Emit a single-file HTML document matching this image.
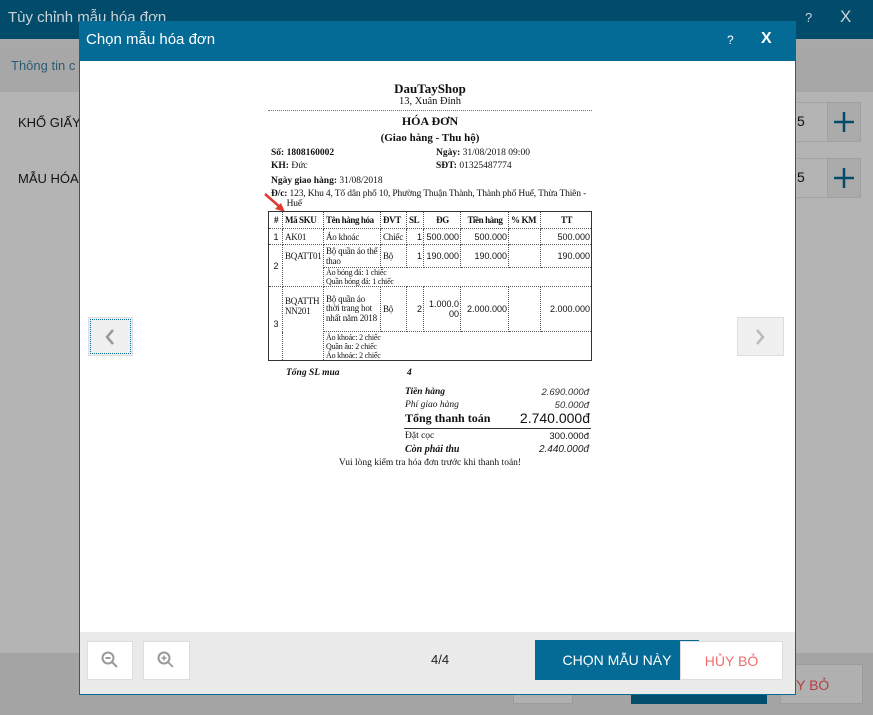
<!DOCTYPE html>
<html><head><meta charset="utf-8"><style>
*{margin:0;padding:0;box-sizing:border-box}
body{width:873px;height:715px;position:relative;overflow:hidden;background:#b4b4b4;font-family:"Liberation Sans","DejaVu Sans",sans-serif}
.abs{position:absolute}
.s{font-family:"Liberation Serif","DejaVu Serif",serif;color:#111}
table{border-collapse:collapse;table-layout:fixed}
td{border:1px dotted #555;font-family:"Liberation Serif",serif;font-size:9px;letter-spacing:-0.2px;padding:0 1px 0 2px;vertical-align:middle;line-height:10px;color:#111;overflow:hidden}
td.n{font-family:"Liberation Sans",sans-serif;font-size:9px;letter-spacing:0}
tr.h td{white-space:nowrap;letter-spacing:-0.4px}
.r{text-align:right}
.c{text-align:center}
</style></head><body>
<div class="abs" style="left:0;top:0;width:873px;height:39px;background:#034b6a"></div>
<div class="abs" style="left:8px;top:9px;font-size:15px;color:#c8d4da">Tùy chỉnh mẫu hóa đơn</div>
<div class="abs" style="left:805px;top:10px;font-size:13px;color:#c8d4da">?</div>
<div class="abs" style="left:840px;top:7px;font-size:17px;color:#c8d4da">X</div>
<div class="abs" style="left:0;top:39px;width:873px;height:8px;background:#a9a9a9"></div>
<div class="abs" style="left:0;top:47px;width:873px;height:45px;background:#a7a7a7"></div>
<div class="abs" style="left:11px;top:58px;font-size:13px;color:#2d5a73">Thông tin c</div>
<div class="abs" style="left:18px;top:115px;font-size:13px;color:#111">KHỔ GIẤY</div>
<div class="abs" style="left:18px;top:171px;font-size:13px;color:#111">MẪU HÓA</div>
<div class="abs" style="left:795px;top:102px;width:34px;height:40px;border:1px solid #a3a3a3;border-right:none"></div>
<div class="abs" style="left:797px;top:113px;font-size:14px;color:#111">5</div>
<div class="abs" style="left:827px;top:102px;width:34px;height:40px;background:#ababab;border:1px solid #a0a0a0"></div>
<svg class="abs" style="left:833px;top:111px" width="22" height="22"><path d="M11 1v20M1 11h20" stroke="#034b6a" stroke-width="2.5"/></svg>
<div class="abs" style="left:795px;top:158px;width:34px;height:40px;border:1px solid #a3a3a3;border-right:none"></div>
<div class="abs" style="left:797px;top:169px;font-size:14px;color:#111">5</div>
<div class="abs" style="left:827px;top:158px;width:34px;height:40px;background:#ababab;border:1px solid #a0a0a0"></div>
<svg class="abs" style="left:833px;top:167px" width="22" height="22"><path d="M11 1v20M1 11h20" stroke="#034b6a" stroke-width="2.5"/></svg>
<div class="abs" style="left:0;top:653px;width:873px;height:62px;background:#a4a4a4"></div>
<div class="abs" style="left:513px;top:664px;width:60px;height:40px;background:#b0b0b0;border:1px solid #9c9c9c"></div>
<div class="abs" style="left:631px;top:664px;width:136px;height:40px;background:#024e6c"></div>
<div class="abs" style="left:780px;top:664px;width:83px;height:40px;background:#b0b0b0;border:1px solid #9c9c9c;color:#b34040;font-size:14px;line-height:40px;padding-left:5px">ỦY BỎ</div>

<div class="abs" style="left:79px;top:21px;width:717px;height:674px;background:#fff;border:1px solid #046a96"></div>
<div class="abs" style="left:79px;top:21px;width:717px;height:40px;background:#046a96"></div>
<div class="abs" style="left:86px;top:31px;font-size:15px;color:#fff">Chọn mẫu hóa đơn</div>
<div class="abs" style="left:727px;top:33px;font-size:12px;color:#fff">?</div>
<div class="abs" style="left:761px;top:30px;font-size:16px;color:#fff;font-weight:bold">X</div>
<div class="abs" style="left:80px;top:632px;width:715px;height:62px;background:#eaeaea"></div>
<div class="abs" style="left:87px;top:641px;width:46px;height:39px;background:#fff;border:1px solid #ddd"></div>
<svg class="abs" style="left:100px;top:650px" width="20" height="20"><circle cx="8" cy="8" r="5.5" fill="none" stroke="#999" stroke-width="2"/><path d="M12 12l5 5M5.5 8h5" stroke="#999" stroke-width="2"/></svg>
<div class="abs" style="left:143px;top:641px;width:47px;height:39px;background:#fff;border:1px solid #ddd"></div>
<svg class="abs" style="left:156px;top:650px" width="20" height="20"><circle cx="8" cy="8" r="5.5" fill="none" stroke="#999" stroke-width="2"/><path d="M12 12l5 5M5.5 8h5M8 5.5v5" stroke="#999" stroke-width="1.6"/></svg>
<div class="abs" style="left:431px;top:652px;font-size:13px;color:#222">4/4</div>
<div class="abs" style="left:535px;top:640px;width:164px;height:40px;background:#046a96;color:#fff;font-size:14px;line-height:40px;text-align:center">CHỌN MẪU NÀY</div>
<div class="abs" style="left:680px;top:641px;width:103px;height:39px;background:#fff;border:1px solid #ddd;color:#f26d6d;font-size:14px;line-height:38px;text-align:center">HỦY BỎ</div>
<div class="abs" style="left:88px;top:317px;width:45px;height:39px;background:#f0f0f0;border:1px solid #ddd;outline:1px dotted #046a96;outline-offset:-3px"></div>
<svg class="abs" style="left:104px;top:328px" width="12" height="18"><path d="M9 2L3 9l6 7" fill="none" stroke="#999" stroke-width="2.5"/></svg>
<div class="abs" style="left:737px;top:317px;width:47px;height:39px;background:#f0f0f0;border:1px solid #ddd"></div>
<svg class="abs" style="left:754px;top:328px" width="12" height="18"><path d="M3 2l6 7-6 7" fill="none" stroke="#bbb" stroke-width="2.5"/></svg>

<div class="abs s" style="left:268px;top:81px;width:324px;text-align:center;font-size:13px;font-weight:bold">DauTayShop</div>
<div class="abs s" style="left:268px;top:96px;width:324px;text-align:center;font-size:10.5px">13, Xuân Đỉnh</div>
<div class="abs" style="left:268px;top:110px;width:324px;border-top:1px dotted #777"></div>
<div class="abs s" style="left:268px;top:114px;width:324px;text-align:center;font-size:12px;font-weight:bold">HÓA ĐƠN</div>
<div class="abs s" style="left:268px;top:132px;width:324px;text-align:center;font-size:11px;font-weight:bold">(Giao hàng - Thu hộ)</div>
<div class="abs s" style="left:271px;top:148px;font-size:9.5px"><b>Số: 1808160002</b></div>
<div class="abs s" style="left:271px;top:161px;font-size:9.5px"><b>KH:</b> Đức</div>
<div class="abs s" style="left:436px;top:148px;font-size:9.5px"><b>Ngày:</b> 31/08/2018 09:00</div>
<div class="abs s" style="left:436px;top:161px;font-size:9.5px"><b>SĐT:</b> 01325487774</div>
<div class="abs s" style="left:271px;top:176px;font-size:9.5px"><b>Ngày giao hàng:</b> 31/08/2018</div>
<div class="abs s" style="left:271px;top:189px;font-size:9.5px;line-height:10px;width:340px;letter-spacing:-0.15px"><b>Đ/c:</b> 123, Khu 4, Tổ dân phố 10, Phường Thuận Thành, Thành phố Huế, Thừa Thiên -<br>&nbsp;&nbsp;&nbsp;&nbsp;&nbsp;&nbsp;&nbsp;Huế</div>
<svg class="abs" style="left:263px;top:192px" width="26" height="24"><path d="M2 2L18 16" stroke="#e03a30" stroke-width="2.5"/><path d="M22 20L12 17l6-6z" fill="#e03a30"/></svg>
<table class="abs" style="left:268px;top:211px;width:323px;border:1px solid #333">
<colgroup><col style="width:14px"><col style="width:41px"><col style="width:57px"><col style="width:26px"><col style="width:17px"><col style="width:37px"><col style="width:48px"><col style="width:32px"><col style="width:51px"></colgroup>
<tr class="h" style="height:17px"><td class="c"><b>#</b></td><td><b>Mã SKU</b></td><td><b>Tên hàng hóa</b></td><td><b>ĐVT</b></td><td><b>SL</b></td><td class="c"><b>ĐG</b></td><td class="c"><b>Tiền hàng</b></td><td><b>% KM</b></td><td class="c"><b>TT</b></td></tr>
<tr style="height:16px"><td class="c n">1</td><td>AK01</td><td>Áo khoác</td><td>Chiếc</td><td class="r n">1</td><td class="r n">500.000</td><td class="r n">500.000</td><td></td><td class="r n">500.000</td></tr>
<tr style="height:23px"><td class="c n" rowspan="2">2</td><td rowspan="2" style="vertical-align:top;padding-top:6px">BQATT01</td><td>Bộ quần áo thể thao</td><td>Bộ</td><td class="r n">1</td><td class="r n">190.000</td><td class="r n">190.000</td><td></td><td class="r n">190.000</td></tr>
<tr style="height:19px"><td colspan="7" style="font-size:8px;line-height:9px">Áo bóng đá: 1 chiếc<br>Quần bóng đá: 1 chiếc</td></tr>
<tr style="height:45px"><td class="c n" rowspan="2">3</td><td rowspan="2" style="vertical-align:top;padding-top:9px">BQATTH NN201</td><td style="line-height:9.5px">Bộ quần áo thời trang hot nhất năm 2018</td><td>Bộ</td><td class="r n">2</td><td class="r n">1.000.0<br>00</td><td class="r n">2.000.000</td><td></td><td class="r n">2.000.000</td></tr>
<tr style="height:29px"><td colspan="7" style="font-size:8px;line-height:9px">Áo khoác: 2 chiếc<br>Quần âu: 2 chiếc<br>Áo khoác: 2 chiếc</td></tr>
</table>
<div class="abs s" style="left:286px;top:368px;font-size:9.5px;font-style:italic;font-weight:bold">Tổng SL mua</div>
<div class="abs s" style="left:407px;top:368px;font-size:9.5px;font-style:italic;font-weight:bold">4</div>
<div class="abs s" style="left:405px;top:387px;font-size:9.5px;font-style:italic;font-weight:bold">Tiền hàng</div>
<div class="abs" style="left:490px;top:387px;width:99px;text-align:right;font-size:9.5px;font-style:italic;color:#333">2.690.000đ</div>
<div class="abs s" style="left:405px;top:400px;font-size:9.5px;font-style:italic">Phí giao hàng</div>
<div class="abs" style="left:490px;top:400px;width:99px;text-align:right;font-size:9.5px;font-style:italic;color:#333">50.000đ</div>
<div class="abs s" style="left:405px;top:411px;font-size:12px;font-weight:bold">Tổng thanh toán</div>
<div class="abs" style="left:470px;top:410px;width:120px;text-align:right;font-size:14px;color:#111">2.740.000đ</div>
<div class="abs" style="left:404px;top:428px;width:187px;border-top:1px solid #333"></div>
<div class="abs s" style="left:405px;top:431px;font-size:9.5px">Đặt cọc</div>
<div class="abs" style="left:490px;top:431px;width:99px;text-align:right;font-size:9.5px;color:#111">300.000đ</div>
<div class="abs s" style="left:405px;top:444px;font-size:10px;font-style:italic;font-weight:bold">Còn phải thu</div>
<div class="abs" style="left:490px;top:444px;width:99px;text-align:right;font-size:10px;font-style:italic;color:#222">2.440.000đ</div>
<div class="abs s" style="left:258px;top:458px;width:344px;text-align:center;font-size:9.5px">Vui lòng kiểm tra hóa đơn trước khi thanh toán!</div>
</body></html>
